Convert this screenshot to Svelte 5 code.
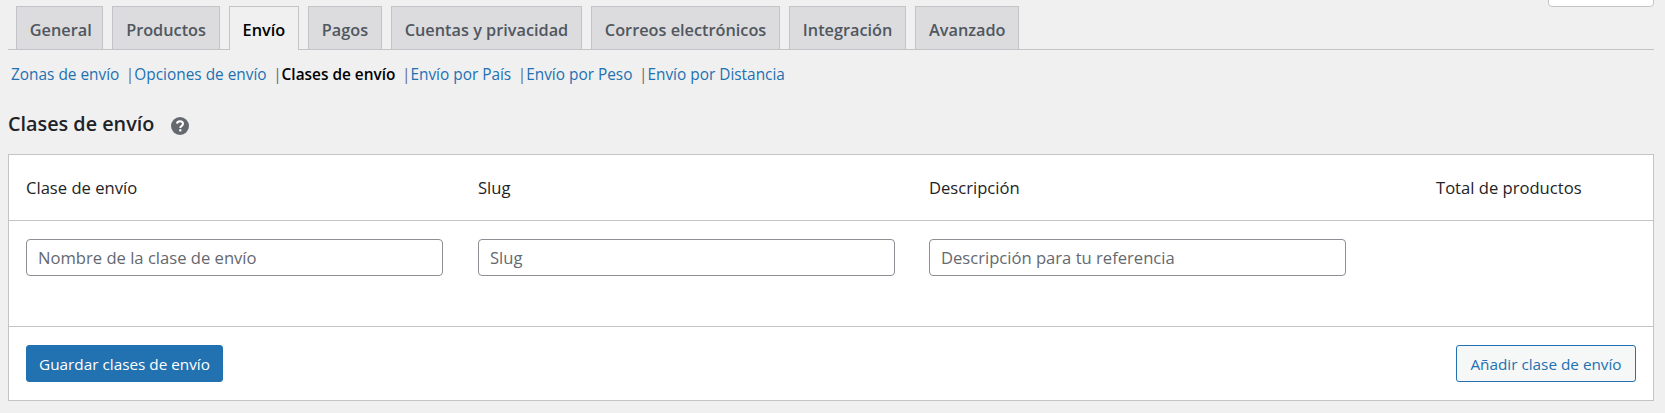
<script>
	const tabs = ['General', 'Productos', 'Envío', 'Pagos', 'Cuentas y privacidad', 'Correos electrónicos', 'Integración', 'Avanzado'];
	const subs = ['Zonas de envío', 'Opciones de envío', 'Clases de envío', 'Envío por País', 'Envío por Peso', 'Envío por Distancia'];
</script>

<div class="page">
	<div class="meta"></div>

	<nav class="tabs">
		{#each tabs as tab}
			<a href="#tab" class="tab" class:active={tab === 'Envío'}>{tab}</a>
		{/each}
	</nav>

	<ul class="subs">
		{#each subs as sub, i}
			<li>
				<a href="#sub" class:current={sub === 'Clases de envío'}>{sub}</a>{#if i < subs.length - 1}<span class="sep">|</span>{/if}
			</li>
		{/each}
	</ul>

	<h2>
		Clases de envío
		<svg class="help" viewBox="0 0 20 20" width="20" height="20" aria-hidden="true">
			<circle cx="10" cy="10" r="9" fill="#646970" />
			<path d="M7 7.6c.2-1.6 1.4-2.4 3-2.4 1.7 0 3 1 3 2.5 0 1.3-.8 1.9-1.6 2.4-.7.4-1 .8-1 1.5v.3" fill="none" stroke="#fff" stroke-width="2" />
			<rect x="9.2" y="13.2" width="2.2" height="2.2" fill="#fff" />
		</svg>
	</h2>

	<section class="card">
		<div class="row head">
			<div>Clase de envío</div>
			<div>Slug</div>
			<div>Descripción</div>
			<div>Total de productos</div>
		</div>
		<div class="row body">
			<input type="text" placeholder="Nombre de la clase de envío" />
			<input type="text" placeholder="Slug" />
			<input type="text" placeholder="Descripción para tu referencia" />
		</div>
		<div class="foot">
			<button class="primary">Guardar clases de envío</button>
			<button class="secondary">Añadir clase de envío</button>
		</div>
	</section>
</div>

<style>
	:global(body) {
		margin: 0;
		background: #f0f0f1;
	}

	.page {
		position: relative;
		height: 413px;
		overflow: hidden;
		padding: 6px 11px 0 8px;
		box-sizing: border-box;
		font-family: "Open Sans", "Noto Sans", sans-serif;
		font-size: 15.4px;
		color: #1d2327;
	}

	.meta {
		position: absolute;
		top: -10px;
		left: 1548px;
		width: 104px;
		height: 15px;
		background: #fff;
		border: 1px solid #c3c4c7;
		border-radius: 4px;
	}

	.tabs {
		display: flex;
		gap: 9px;
		height: 43px;
		padding-left: 8px;
		border-bottom: 1px solid #c3c4c7;
	}

	.tab {
		display: flex;
		align-items: center;
		justify-content: center;
		box-sizing: border-box;
		height: 43px;
		padding: 3px 12.8px 0;
		background: #dcdcde;
		border: 1px solid #c3c4c7;
		border-bottom: 0;
		color: #50575e;
		font-size: 16.3px;
		font-weight: 600;
		text-decoration: none;
	}

	.tab:first-child {
		padding-right: 10.6px;
	}

	.tab.active {
		height: 44px;
		background: #f0f0f1;
		color: #000;
	}

	.subs {
		display: flex;
		height: 20px;
		margin: 14px 0 0;
		padding: 0 0 0 3px;
		list-style: none;
		line-height: 22px;
		color: #646970;
	}

	.subs a {
		color: #2271b1;
		text-decoration: none;
	}

	.subs a.current {
		color: #000;
		font-weight: 600;
	}

	.sep {
		margin: 0 0 0 6.5px;
	}

	h2 {
		display: flex;
		align-items: center;
		gap: 16px;
		height: 24px;
		margin: 28px 0 0;
		font-size: 19.8px;
		font-weight: 600;
		line-height: 24px;
	}

	.help {
		margin-top: 3px;
	}

	.card {
		box-sizing: border-box;
		height: 247px;
		margin-top: 18px;
		background: #fff;
		border: 1px solid #c3c4c7;
	}

	.row {
		display: grid;
		grid-template-columns: 452px 451px 507px auto;
		padding-left: 17px;
	}

	.head {
		align-items: center;
		height: 65px;
		border-bottom: 1px solid #c3c4c7;
		font-size: 16.6px;
	}

	.body {
		height: 106px;
		padding-top: 18px;
		box-sizing: border-box;
		border-bottom: 1px solid #c3c4c7;
	}

	input {
		box-sizing: border-box;
		width: 417px;
		height: 37px;
		padding: 0 11px;
		background: #fff;
		border: 1px solid #8c8f94;
		border-radius: 4px;
		font: inherit;
		font-size: 16.6px;
		color: #2c3338;
	}

	input::placeholder {
		color: #646970;
		opacity: 1;
	}

	.foot {
		display: flex;
		justify-content: space-between;
		padding: 18px 17px 0;
	}

	button {
		box-sizing: border-box;
		height: 37px;
		padding: 0;
		border-radius: 3px;
		font: inherit;
		font-size: 15.3px;
	}

	.primary {
		width: 197px;
		background: #2271b1;
		border: 1px solid #2271b1;
		color: #fff;
	}

	.secondary {
		width: 180px;
		background: #f6f7f7;
		border: 1px solid #2271b1;
		color: #2271b1;
	}
</style>
